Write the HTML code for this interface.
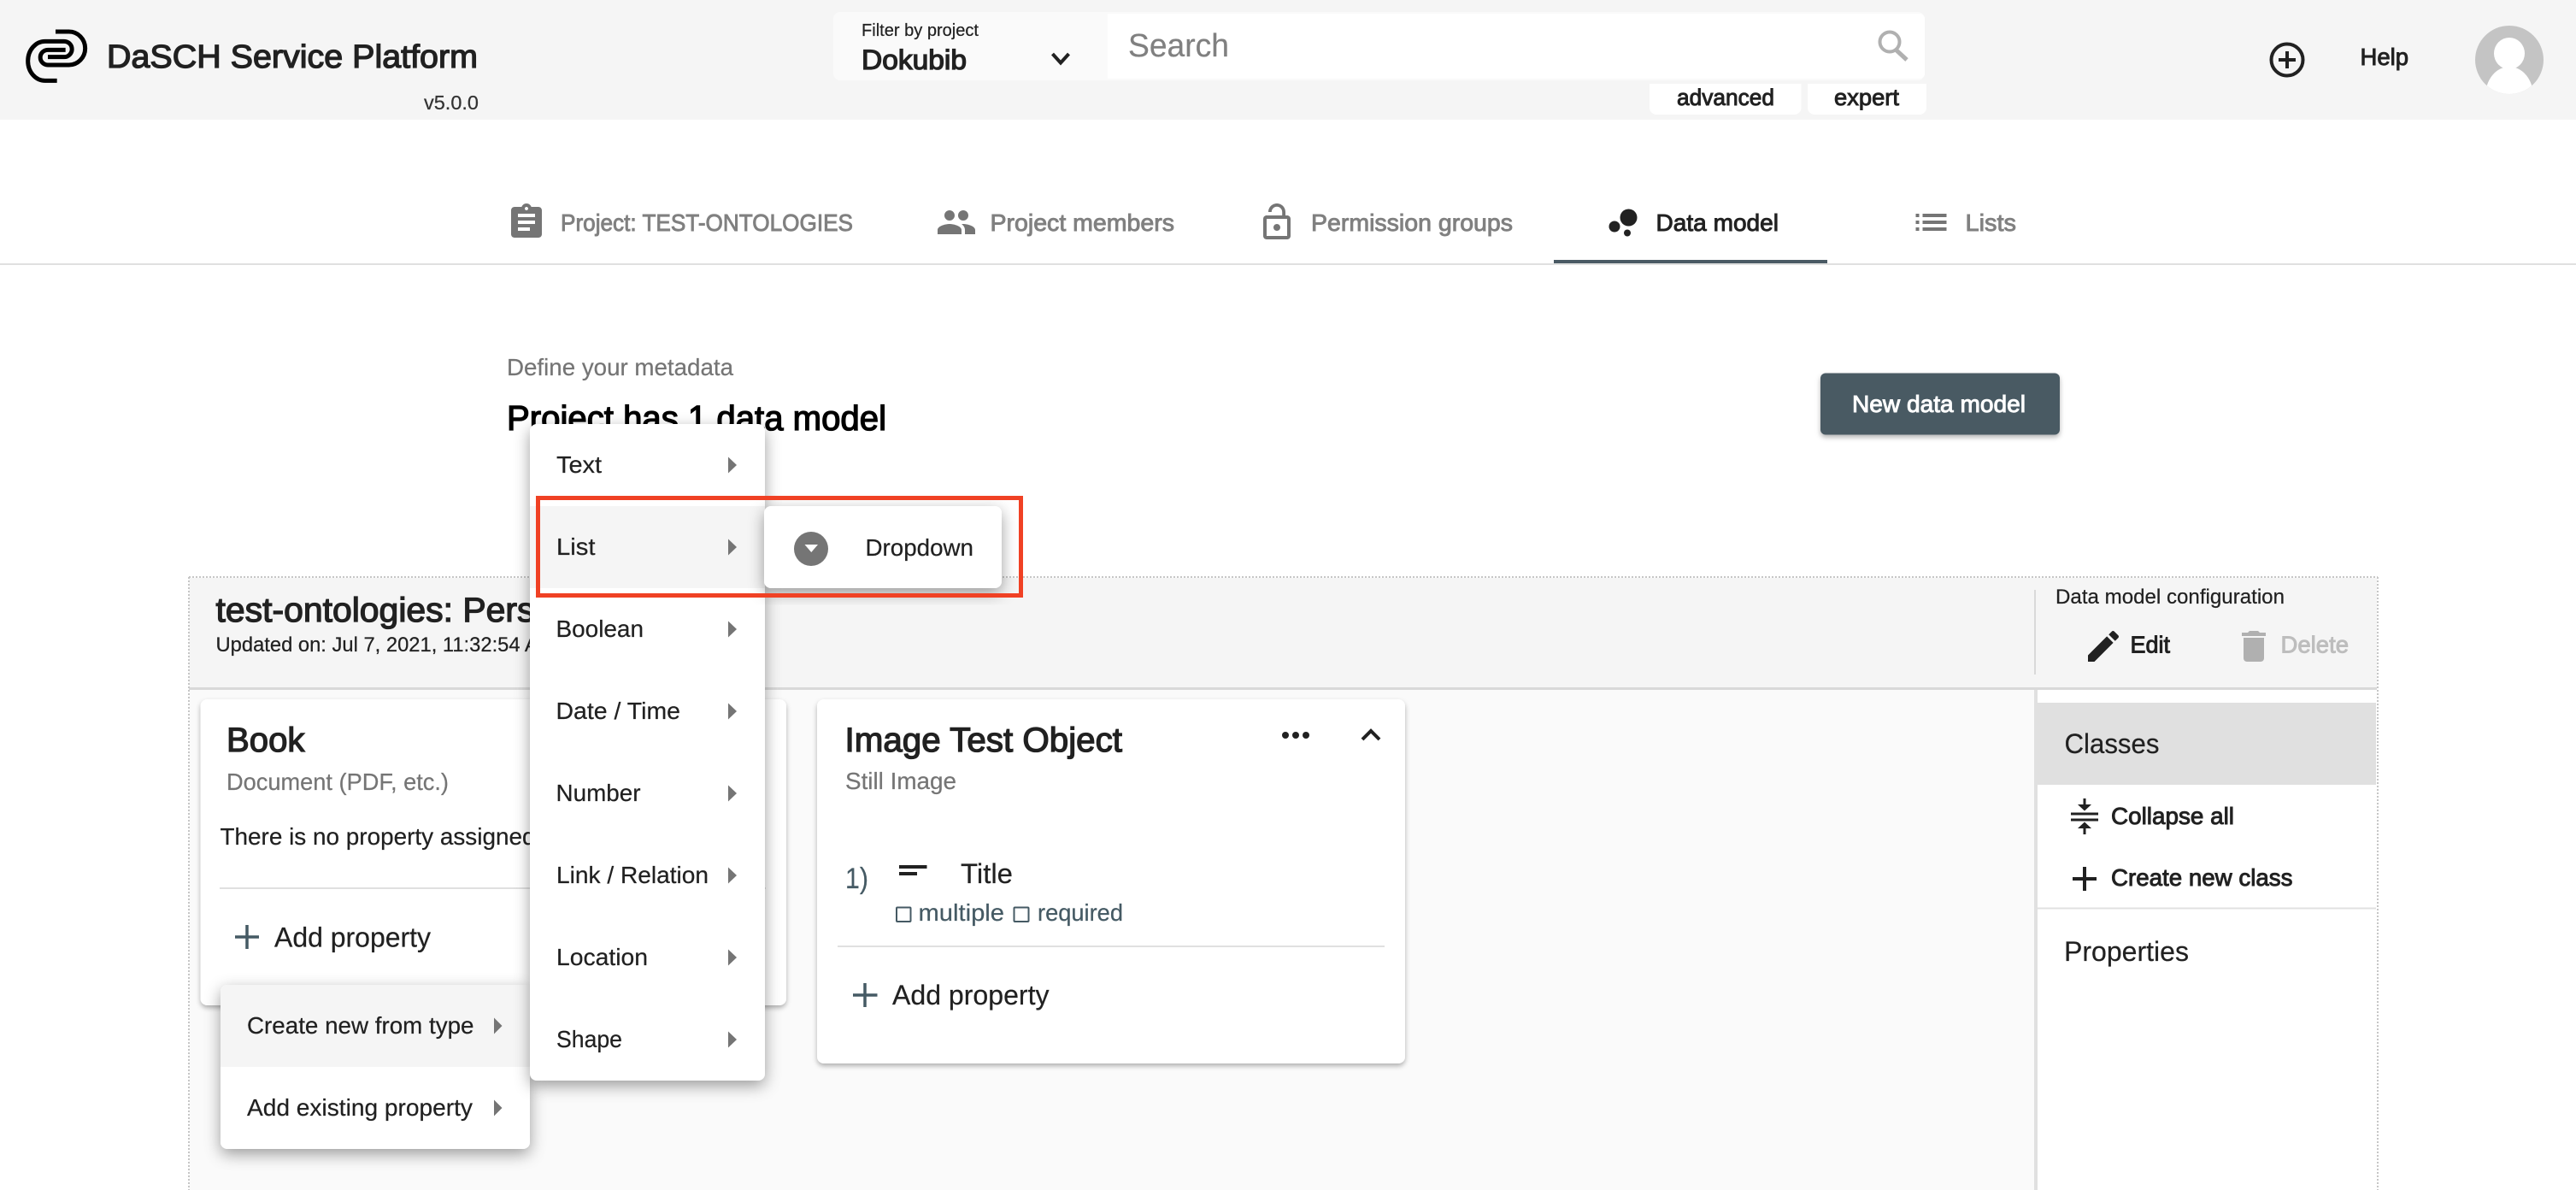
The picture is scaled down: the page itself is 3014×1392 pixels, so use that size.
<!DOCTYPE html>
<html lang="en">
<head>
<meta charset="utf-8">
<title>DaSCH Service Platform</title>
<style>
html,body{margin:0;padding:0;background:#fff;width:3014px;height:1392px;overflow:hidden}
svg{display:block;position:absolute;left:0;top:0}
text{font-family:"Liberation Sans",Arial,sans-serif;fill:#212121;stroke:#212121;stroke-width:.22px}
.m{stroke:#212121;stroke-width:.95px}
.l{stroke:#212121;stroke-width:1.3px}
.g{fill:#757575;stroke:#757575}
.gm{fill:#808080;stroke:#808080;stroke-width:.9px}
.b{fill:#455a64;stroke:#455a64}
</style>
</head>
<body>
<svg width="3014" height="1392" viewBox="0 0 3014 1392" xmlns="http://www.w3.org/2000/svg">
<defs>
<filter id="card" x="-10%" y="-10%" width="120%" height="125%"><feDropShadow dx="0" dy="3" stdDeviation="3" flood-color="#000" flood-opacity=".3"/></filter>
<filter id="menu" x="-30%" y="-20%" width="160%" height="140%"><feDropShadow dx="0" dy="6" stdDeviation="9" flood-color="#000" flood-opacity=".38"/></filter>
<filter id="btn" x="-10%" y="-20%" width="120%" height="150%"><feDropShadow dx="0" dy="3" stdDeviation="3" flood-color="#000" flood-opacity=".3"/></filter>
<clipPath id="av"><circle cx="2936" cy="70" r="40"/></clipPath>
</defs>

<!-- header -->
<rect x="0" y="0" width="3014" height="140" fill="#f5f5f5"/>
<g transform="translate(20 25) scale(.3333)" fill="none" stroke="#000" stroke-width="15">
<path d="M135 36H182A57 58.500 0 0 1 182 153H108A26.500 26.500 0 0 1 108 100H170"/>
<path d="M140 208H98A60 69 0 0 1 98 70H165A27.500 27.500 0 0 1 165 125H108"/>
</g>
<text x="125" y="79" font-size="38" class="l" textLength="434" lengthAdjust="spacingAndGlyphs">DaSCH Service Platform</text>
<text x="496" y="128" font-size="23" style="fill:#333;stroke:#333" textLength="64" lengthAdjust="spacingAndGlyphs">v5.0.0</text>

<rect x="975" y="14" width="1277" height="80" rx="8" fill="#fafafa"/>
<path d="M1296 16H2246a6 6 0 0 1 6 6V86a6 6 0 0 1 -6 6H1296Z" fill="#fff"/>
<text x="1008" y="42" font-size="20" textLength="137" lengthAdjust="spacingAndGlyphs">Filter by project</text>
<text x="1008" y="81" font-size="32" class="l" textLength="123" lengthAdjust="spacingAndGlyphs">Dokubib</text>
<path d="M1231.500 63L1241 73.500L1250.500 63" fill="none" stroke="#212121" stroke-width="4"/>
<text x="1320" y="66" font-size="38" style="fill:#808080;stroke:#808080" textLength="118" lengthAdjust="spacingAndGlyphs">Search</text>
<circle cx="2211" cy="49" r="11.500" fill="none" stroke="#b0b0b0" stroke-width="4"/>
<path d="M2218 58L2231 70" stroke="#b0b0b0" stroke-width="5" fill="none"/>

<path d="M1930 98H2107.500V126a8 8 0 0 1 -8 8H1938a8 8 0 0 1 -8 -8Z" fill="#fff"/>
<path d="M2115 98H2254V126a8 8 0 0 1 -8 8H2123a8 8 0 0 1 -8 -8Z" fill="#fff"/>
<text x="1962" y="123" font-size="27" class="m" textLength="114" lengthAdjust="spacingAndGlyphs">advanced</text>
<text x="2146" y="123" font-size="27" class="m" textLength="76" lengthAdjust="spacingAndGlyphs">expert</text>

<circle cx="2676" cy="70" r="18.500" fill="none" stroke="#212121" stroke-width="4"/>
<path d="M2666 70H2686M2676 60V80" stroke="#212121" stroke-width="4" fill="none"/>
<text x="2761.500" y="76" font-size="28" class="m" textLength="56.500" lengthAdjust="spacingAndGlyphs">Help</text>
<circle cx="2936" cy="70" r="40" fill="#c4c4c4"/>
<g clip-path="url(#av)" fill="#fff">
<ellipse cx="2936" cy="62.500" rx="18" ry="18.500"/>
<ellipse cx="2936" cy="112" rx="28" ry="34"/>
</g>

<!-- tabs -->
<rect x="0" y="308" width="3014" height="2" fill="#e0e0e0"/>
<rect x="1818" y="304" width="320" height="4" fill="#4a5a64"/>
<path transform="translate(592 236) scale(2)" fill="#757575" d="M19 3h-4.180C14.400 1.840 13.300 1 12 1c-1.300 0-2.400.840-2.820 2H5c-1.100 0-2 .900-2 2v14c0 1.100.900 2 2 2h14c1.100 0 2-.900 2-2V5c0-1.100-.900-2-2-2zm-7 0c.550 0 1 .450 1 1s-.450 1-1 1-1-.450-1-1 .450-1 1-1zm2 14H7v-2h7v2zm3-4H7v-2h10v2zm0-4H7V7h10v2z"/>
<text x="656" y="270" font-size="28" class="gm" textLength="342" lengthAdjust="spacingAndGlyphs">Project: TEST-ONTOLOGIES</text>
<path transform="translate(1095 236) scale(2)" fill="#757575" d="M16 11c1.660 0 2.990-1.340 2.990-3S17.660 5 16 5c-1.660 0-3 1.340-3 3s1.340 3 3 3zm-8 0c1.660 0 2.990-1.340 2.990-3S9.660 5 8 5C6.340 5 5 6.340 5 8s1.340 3 3 3zm0 2c-2.330 0-7 1.170-7 3.500V19h14v-2.500c0-2.330-4.670-3.500-7-3.500zm8 0c-.290 0-.620.020-.970.050 1.160.840 1.970 1.970 1.970 3.450V19h6v-2.500c0-2.330-4.670-3.500-7-3.500z"/>
<text x="1158.500" y="270" font-size="28" class="gm" textLength="215.500" lengthAdjust="spacingAndGlyphs">Project members</text>
<path transform="translate(1470 236) scale(2)" fill="#757575" d="M12 17c1.100 0 2-.900 2-2s-.900-2-2-2-2 .900-2 2 .900 2 2 2zm6-9h-1V6c0-2.760-2.240-5-5-5S7 3.240 7 6h1.900c0-1.710 1.390-3.100 3.100-3.100 1.710 0 3.100 1.390 3.100 3.100v2H6c-1.100 0-2 .900-2 2v10c0 1.100.900 2 2 2h12c1.100 0 2-.900 2-2V10c0-1.100-.900-2-2-2zm0 12H6V10h12v10z"/>
<text x="1534" y="270" font-size="28" class="gm" textLength="236" lengthAdjust="spacingAndGlyphs">Permission groups</text>
<g fill="#212121"><circle cx="1905.500" cy="254.500" r="10"/><circle cx="1889" cy="265" r="6.500"/><circle cx="1904" cy="272.500" r="4"/></g>
<text x="1937.500" y="270" font-size="28" class="m" textLength="143.500" lengthAdjust="spacingAndGlyphs">Data model</text>
<path transform="translate(2235.500 236) scale(2)" fill="#757575" d="M3 13h2v-2H3v2zm0 4h2v-2H3v2zm0-8h2V7H3v2zm4 4h14v-2H7v2zm0 4h14v-2H7v2zM7 7v2h14V7H7z"/>
<text x="2299.500" y="270" font-size="28" class="gm" textLength="59.500" lengthAdjust="spacingAndGlyphs">Lists</text>

<!-- page heading -->
<text x="593" y="439" font-size="28" class="g" textLength="265" lengthAdjust="spacingAndGlyphs">Define your metadata</text>
<text x="593" y="503" font-size="41" style="fill:#000;stroke:#000;stroke-width:1.35px" textLength="444" lengthAdjust="spacingAndGlyphs">Project has 1 data model</text>
<rect x="2130" y="436.500" width="280" height="72" rx="6" fill="#4a5a64" filter="url(#btn)"/>
<text x="2167" y="482" font-size="28" style="fill:#fff;stroke:#fff;stroke-width:.95px" textLength="203" lengthAdjust="spacingAndGlyphs">New data model</text>

<!-- ontology section -->
<rect x="221" y="676" width="2560" height="128" fill="#f5f5f5"/>
<rect x="221" y="806" width="2159" height="586" fill="#fafafa"/>
<rect x="221" y="804" width="2560" height="3" fill="#d9d9d9"/>
<path d="M221 675H2782M221 675V1392M2782 675V1392" fill="none" stroke="#c6c6c6" stroke-width="2" stroke-dasharray="2 2"/>
<text x="252.500" y="727" font-size="40" class="l" textLength="373" lengthAdjust="spacingAndGlyphs">test-ontologies: Pers</text>
<text x="252.500" y="762" font-size="24" textLength="397" lengthAdjust="spacingAndGlyphs">Updated on: Jul 7, 2021, 11:32:54 AM</text>

<rect x="2380" y="690" width="2" height="99" fill="#d9d9d9"/>
<text x="2405" y="706" font-size="24" textLength="268" lengthAdjust="spacingAndGlyphs">Data model configuration</text>
<path transform="translate(2437 732) scale(2)" fill="#212121" d="M3 17.250V21h3.750L17.810 9.940l-3.750-3.750L3 17.250zM20.710 7.040c.390-.390.390-1.020 0-1.410l-2.340-2.340c-.390-.390-1.020-.390-1.410 0l-1.830 1.830 3.750 3.750 1.830-1.830z"/>
<text x="2492.500" y="763.500" font-size="28" class="m" textLength="46.500" lengthAdjust="spacingAndGlyphs">Edit</text>
<path transform="translate(2613 732) scale(2)" fill="#b0b0b0" d="M6 19c0 1.100.900 2 2 2h8c1.100 0 2-.900 2-2V7H6v12zM19 4h-3.500l-1-1h-5l-1 1H5v2h14V4z"/>
<text x="2668.500" y="763.500" font-size="28" style="fill:#bdbdbd;stroke:#bdbdbd;stroke-width:.95px" textLength="79.500" lengthAdjust="spacingAndGlyphs">Delete</text>

<!-- sidebar -->
<rect x="2380" y="807" width="4" height="585" fill="#e0e0e0"/>
<rect x="2384" y="807" width="396" height="585" fill="#fff"/>
<rect x="2384" y="822" width="396" height="96" fill="#e0e0e0"/>
<text x="2415.500" y="881" font-size="32" textLength="111" lengthAdjust="spacingAndGlyphs">Classes</text>
<g fill="#212121">
<rect x="2423" y="950.500" width="32" height="3"/><rect x="2423" y="957.500" width="32" height="3"/>
<rect x="2437.500" y="934" width="3" height="8"/><path d="M2431 941H2447L2439 948.500Z"/>
<rect x="2437.500" y="968" width="3" height="8"/><path d="M2431 969H2447L2439 961.500Z"/>
</g>
<text x="2470" y="964" font-size="28" class="m" textLength="144" lengthAdjust="spacingAndGlyphs">Collapse all</text>
<path d="M2425 1028H2453M2439 1014V1042" stroke="#212121" stroke-width="4" fill="none"/>
<text x="2470" y="1036" font-size="28" class="m" textLength="212.500" lengthAdjust="spacingAndGlyphs">Create new class</text>
<rect x="2384" y="1061.500" width="396" height="2" fill="#e0e0e0"/>
<text x="2415" y="1124" font-size="32" textLength="146" lengthAdjust="spacingAndGlyphs">Properties</text>

<!-- Book card -->
<rect x="234.500" y="818" width="685.500" height="358" rx="8" fill="#fff" filter="url(#card)"/>
<text x="265" y="879" font-size="40" class="l" textLength="91.500" lengthAdjust="spacingAndGlyphs">Book</text>
<text x="265" y="924" font-size="28" class="g" textLength="260" lengthAdjust="spacingAndGlyphs">Document (PDF, etc.)</text>
<text x="257.500" y="988" font-size="28" textLength="369" lengthAdjust="spacingAndGlyphs">There is no property assigned</text>
<rect x="257" y="1038" width="639" height="2" fill="#e0e0e0"/>
<path d="M275 1096H303M289 1082V1110" stroke="#455a64" stroke-width="3.500" fill="none"/>
<text x="321" y="1107.500" font-size="32" textLength="183" lengthAdjust="spacingAndGlyphs">Add property</text>

<!-- Image Test Object card -->
<rect x="956" y="818" width="688" height="426" rx="8" fill="#fff" filter="url(#card)"/>
<text x="988.500" y="879" font-size="40" class="l" textLength="324.500" lengthAdjust="spacingAndGlyphs">Image Test Object</text>
<text x="989" y="923" font-size="28" class="g" textLength="130" lengthAdjust="spacingAndGlyphs">Still Image</text>
<g fill="#212121"><circle cx="1504" cy="860" r="4"/><circle cx="1516" cy="860" r="4"/><circle cx="1528" cy="860" r="4"/></g>
<path d="M1594 865L1604 855L1614 865" fill="none" stroke="#212121" stroke-width="4"/>
<text x="989" y="1039" font-size="34" class="b" textLength="27" lengthAdjust="spacingAndGlyphs">1)</text>
<rect x="1052" y="1012" width="32.500" height="4" fill="#212121"/>
<rect x="1052" y="1020" width="21" height="4" fill="#212121"/>
<text x="1124" y="1033" font-size="32" textLength="61" lengthAdjust="spacingAndGlyphs">Title</text>
<rect x="1049" y="1061.500" width="16.500" height="16.500" rx="1" fill="none" stroke="#455a64" stroke-width="2"/>
<text x="1074.500" y="1077" font-size="28" class="b" textLength="100.500" lengthAdjust="spacingAndGlyphs">multiple</text>
<rect x="1186.500" y="1061.500" width="17" height="16.500" rx="1" fill="none" stroke="#455a64" stroke-width="2"/>
<text x="1214" y="1077" font-size="28" class="b" textLength="100" lengthAdjust="spacingAndGlyphs">required</text>
<rect x="980" y="1106" width="640" height="2" fill="#e0e0e0"/>
<path d="M998 1164H1026.500M1012 1150V1178" stroke="#455a64" stroke-width="3.500" fill="none"/>
<text x="1044" y="1175" font-size="32" textLength="183.500" lengthAdjust="spacingAndGlyphs">Add property</text>

<!-- property menu -->
<rect x="258" y="1152" width="362" height="192" rx="8" fill="#fff" filter="url(#menu)"/>
<path d="M258 1248V1160a8 8 0 0 1 8 -8H620V1248Z" fill="#f5f5f5"/>
<text x="289" y="1209" font-size="28" textLength="265.500" lengthAdjust="spacingAndGlyphs">Create new from type</text>
<path d="M578 1190.500L587.500 1200L578 1209.500Z" fill="#757575"/>
<text x="289" y="1305" font-size="28" textLength="264" lengthAdjust="spacingAndGlyphs">Add existing property</text>
<path d="M578 1286.500L587.500 1296L578 1305.500Z" fill="#757575"/>

<!-- type menu -->
<rect x="620" y="496" width="275" height="768" rx="8" fill="#fff" filter="url(#menu)"/>
<rect x="620" y="592" width="275" height="96" fill="#f5f5f5"/>
<text x="651" y="553" font-size="28" textLength="53" lengthAdjust="spacingAndGlyphs">Text</text>
<text x="651" y="649" font-size="28" textLength="45.500" lengthAdjust="spacingAndGlyphs">List</text>
<text x="650.500" y="745" font-size="28" textLength="102.500" lengthAdjust="spacingAndGlyphs">Boolean</text>
<text x="650.500" y="841" font-size="28" textLength="145.500" lengthAdjust="spacingAndGlyphs">Date / Time</text>
<text x="650.500" y="937" font-size="28" textLength="99" lengthAdjust="spacingAndGlyphs">Number</text>
<text x="651" y="1033" font-size="28" textLength="178" lengthAdjust="spacingAndGlyphs">Link / Relation</text>
<text x="651" y="1129" font-size="28" textLength="107" lengthAdjust="spacingAndGlyphs">Location</text>
<text x="651" y="1225" font-size="28" textLength="77" lengthAdjust="spacingAndGlyphs">Shape</text>
<g fill="#757575">
<path d="M852 534.500L862 544L852 553.500Z"/>
<path d="M852 630.500L862 640L852 649.500Z"/>
<path d="M852 726.500L862 736L852 745.500Z"/>
<path d="M852 822.500L862 832L852 841.500Z"/>
<path d="M852 918.500L862 928L852 937.500Z"/>
<path d="M852 1014.500L862 1024L852 1033.500Z"/>
<path d="M852 1110.500L862 1120L852 1129.500Z"/>
<path d="M852 1206.500L862 1216L852 1225.500Z"/>
</g>

<!-- submenu -->
<rect x="894" y="592" width="278" height="96" rx="8" fill="#fff" filter="url(#menu)"/>
<circle cx="949" cy="642" r="20" fill="#757575"/>
<path d="M941.500 637H957L949.250 646Z" fill="#fff"/>
<text x="1012.500" y="650" font-size="28" textLength="126.500" lengthAdjust="spacingAndGlyphs">Dropdown</text>

<!-- annotation -->
<rect x="629.500" y="582.500" width="565" height="114" fill="none" stroke="#f04124" stroke-width="5"/>
</svg>
</body>
</html>
